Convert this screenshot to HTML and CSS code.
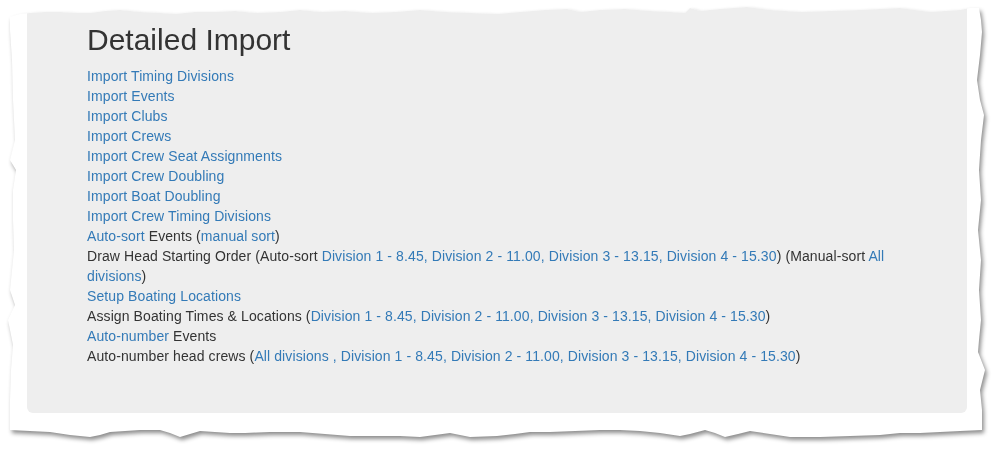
FILE: index.html
```html
<!DOCTYPE html>
<html lang="en">
<head>
<meta charset="utf-8">
<title>Detailed Import</title>
<link rel="stylesheet" href="styles.css">
</head>
<body>
<div class="sheet">
  <div class="paper">
    <div class="jumbotron">
      <h2 class="title">Detailed Import</h2>
      <div class="lines">
        <div><a href="#">Import Timing Divisions</a></div>
        <div><a href="#">Import Events</a></div>
        <div><a href="#">Import Clubs</a></div>
        <div><a href="#">Import Crews</a></div>
        <div><a href="#">Import Crew Seat Assignments</a></div>
        <div><a href="#">Import Crew Doubling</a></div>
        <div><a href="#">Import Boat Doubling</a></div>
        <div><a href="#">Import Crew Timing Divisions</a></div>
        <div><a href="#">Auto-sort</a> Events (<a href="#">manual sort</a>)</div>
        <div>Draw Head Starting Order (Auto-sort <a href="#">Division 1 - 8.45,</a> <a href="#">Division 2 - 11.00,</a> <a href="#">Division 3 - 13.15,</a> <a href="#">Division 4 - 15.30</a>) (Manual-sort <a href="#">All divisions</a>)</div>
        <div><a href="#">Setup Boating Locations</a></div>
        <div>Assign Boating Times &amp; Locations (<a href="#">Division 1 - 8.45,</a> <a href="#">Division 2 - 11.00,</a> <a href="#">Division 3 - 13.15,</a> <a href="#">Division 4 - 15.30</a>)</div>
        <div><a href="#">Auto-number</a> Events</div>
        <div>Auto-number head crews (<a href="#">All divisions ,</a> <a href="#">Division 1 - 8.45,</a> <a href="#">Division 2 - 11.00,</a> <a href="#">Division 3 - 13.15,</a> <a href="#">Division 4 - 15.30</a>)</div>
      </div>
    </div>
  </div>
</div>
</body>
</html>
```
FILE: styles.css
```css
html, body {
  margin: 0;
  padding: 0;
  background: #fff;
}
body {
  width: 997px;
  height: 452px;
  overflow: hidden;
  font-family: "Liberation Sans", Arial, Helvetica, sans-serif;
  font-size: 14px;
  line-height: 20px;
  color: #333;
}
.sheet {
  filter: drop-shadow(2px 3px 2px rgba(0, 0, 0, 0.45));
}
.paper {
  box-sizing: border-box;
  height: 452px;
  padding: 0 30px 39px 27px;
  background: #fff;
  clip-path: polygon(
    10px 17px, 20px 14px, 30px 13px, 45px 12px, 60px 12px, 75px 13px, 90px 13px, 105px 11px, 120px 10px,
    140px 12px, 160px 13px, 175px 14px, 195px 12px, 215px 12px, 235px 11px, 255px 13px, 280px 12px,
    300px 10px, 320px 12px, 345px 11px, 370px 13px, 395px 12px, 420px 10px, 445px 12px, 470px 13px,
    497px 14px, 520px 12px, 545px 10px, 567px 9px, 580px 12px, 600px 10px, 625px 9px, 650px 11px,
    670px 12px, 685px 13px, 690px 8px, 700px 11px, 720px 9px, 747px 7px, 770px 10px, 800px 12px,
    830px 11px, 860px 10px, 880px 9px, 900px 8px, 915px 10px, 930px 12px, 945px 11px, 960px 10px, 970px 8px, 979px 8px,
    981px 20px, 982px 32px, 980px 55px, 977px 80px, 980px 100px, 984px 115px, 981px 140px, 979px 170px,
    981px 200px, 978px 230px, 981px 260px, 979px 290px, 981px 320px, 979px 340px, 978px 352px, 985px 370px,
    980px 390px, 982px 410px, 982px 430px,
    960px 431px, 940px 432px, 920px 433px, 900px 433px, 880px 435px, 850px 436px, 820px 437px, 790px 437px,
    770px 434px, 750px 431px, 738px 434px, 725px 437px, 715px 433px, 705px 430px, 690px 434px, 680px 436px,
    660px 433px, 640px 431px, 620px 430px, 600px 430px, 575px 431px, 550px 432px, 530px 432px, 515px 434px,
    497px 436px, 470px 437px, 460px 435px, 450px 433px, 435px 435px, 420px 437px, 400px 436px, 380px 436px,
    365px 436px, 350px 436px, 325px 434px, 300px 432px, 270px 432px, 245px 433px, 230px 433px, 215px 432px,
    200px 431px, 190px 434px, 180px 437px, 170px 433px, 160px 430px, 140px 430px, 125px 431px, 110px 432px,
    100px 435px, 90px 437px, 70px 435px, 50px 432px, 30px 431px, 10px 430px,
    10px 400px, 11px 370px, 13px 345px, 8px 320px, 15px 305px, 10px 290px, 12px 270px, 14px 250px,
    13px 220px, 13px 190px, 16px 170px, 10px 160px, 15px 140px, 13px 100px, 12px 60px, 10px 30px
  );
}
.jumbotron {
  box-sizing: border-box;
  height: 413px;
  background: #eee;
  border-radius: 6px;
  padding: 23px 60px 47px;
}
.title {
  margin: 0 0 10px;
  font-family: "Liberation Sans", Arial, Helvetica, sans-serif;
  font-size: 30px;
  font-weight: 500;
  line-height: 33px;
  color: #333;
}
.lines {
  letter-spacing: 0.1px;
}
.lines a {
  color: #337ab7;
  text-decoration: none;
}
```
